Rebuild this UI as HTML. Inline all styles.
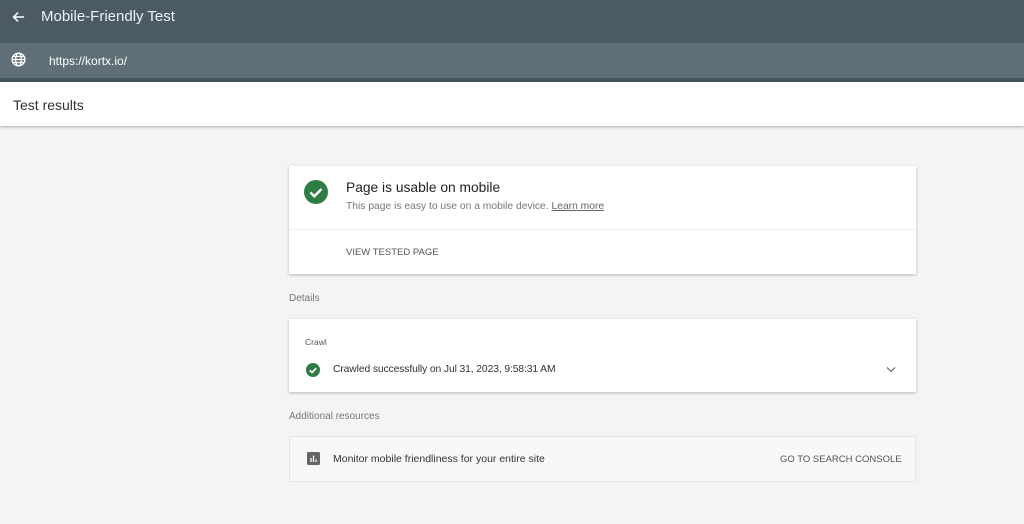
<!DOCTYPE html>
<html><head><style>
body{margin:0;width:1024px;height:524px;background:#f4f4f4;font-family:"Liberation Sans",sans-serif;position:relative;overflow:hidden}
.a{position:absolute}
</style></head><body>
<div class="a" style="left:0;top:0;width:1024px;height:43px;background:#4b5a63"></div>
<div class="a" style="left:0;top:43px;width:1024px;height:35px;background:#5f6e77"></div>
<div class="a" style="left:0;top:78px;width:1024px;height:4px;background:#46545c"></div>
<svg class="a" style="left:11px;top:10px" width="14" height="14" viewBox="0 0 16 16"><path d="M15 8H3M8 3L3 8l5 5" stroke="#fff" stroke-width="1.8" fill="none"/></svg>
<div class="a" style="left:41px;top:8px;font-size:15px;color:#eef1f3">Mobile-Friendly Test</div>
<svg class="a" style="left:11px;top:52px" width="15" height="15" viewBox="0 0 16 16" fill="none" stroke="#fff" stroke-width="1.4"><circle cx="8" cy="8" r="6.8"/><ellipse cx="8" cy="8" rx="3" ry="6.8"/><path d="M1.2 8h13.6M2.2 4.8h11.6M2.2 11.2h11.6"/></svg>
<div class="a" style="left:49px;top:54px;font-size:12px;color:#fff">https://kortx.io/</div>
<div class="a" style="left:0;top:82px;width:1024px;height:44px;background:#fff;box-shadow:0 1px 3px rgba(0,0,0,.3)"></div>
<div class="a" style="left:13px;top:97px;font-size:14px;color:#333">Test results</div>

<div class="a" style="left:289px;top:166px;width:627px;height:108px;background:#fff;box-shadow:0 1px 3px rgba(0,0,0,.25)"></div>
<svg class="a" style="left:304px;top:180px" width="24" height="24" viewBox="0 0 24 24"><circle cx="12" cy="12" r="12" fill="#2e7d45"/><path d="M6.5 12.5l3.8 3.8L17.5 9" stroke="#fff" stroke-width="2.4" fill="none"/></svg>
<div class="a" style="left:346px;top:180px;font-size:13.8px;color:#222">Page is usable on mobile</div>
<div class="a" style="left:346px;top:201px;font-size:10.3px;color:#777">This page is easy to use on a mobile device. <span style="text-decoration:underline;color:#666">Learn more</span></div>
<div class="a" style="left:289px;top:229px;width:627px;height:1px;background:#eee"></div>
<div class="a" style="left:346px;top:247px;font-size:9.5px;color:#555;letter-spacing:0">VIEW TESTED PAGE</div>

<div class="a" style="left:289px;top:293px;font-size:10px;color:#777">Details</div>
<div class="a" style="left:289px;top:319px;width:627px;height:73px;background:#fff;box-shadow:0 1px 3px rgba(0,0,0,.25)"></div>
<div class="a" style="left:305px;top:337px;font-size:8.5px;color:#555">Crawl</div>
<svg class="a" style="left:306px;top:363px" width="14" height="14" viewBox="0 0 24 24"><circle cx="12" cy="12" r="12" fill="#2e7d45"/><path d="M6.5 12.5l3.8 3.8L17.5 9" stroke="#fff" stroke-width="2.8" fill="none"/></svg>
<div class="a" style="left:333px;top:364px;font-size:10.3px;color:#333;letter-spacing:-.1px">Crawled successfully on Jul 31, 2023, 9:58:31 AM</div>
<svg class="a" style="left:886px;top:366px" width="10" height="7" viewBox="0 0 10 7"><path d="M1 1.5l4 4 4-4" stroke="#777" stroke-width="1.3" fill="none"/></svg>

<div class="a" style="left:289px;top:411px;font-size:10px;color:#777">Additional resources</div>
<div class="a" style="left:289px;top:436px;width:625px;height:44px;background:#f8f8f8;border:1px solid #e6e6e6"></div>
<svg class="a" style="left:307px;top:452px" width="13" height="13" viewBox="0 0 13 13"><rect width="13" height="13" rx="1.5" fill="#666"/><path d="M4 10V6M6.5 10V3.5M9 10V7.5" stroke="#fff" stroke-width="1.3"/></svg>
<div class="a" style="left:333px;top:453px;font-size:10.5px;color:#333">Monitor mobile friendliness for your entire site</div>
<div class="a" style="left:780px;top:454px;font-size:9.5px;color:#555;letter-spacing:0">GO TO SEARCH CONSOLE</div>
</body></html>
